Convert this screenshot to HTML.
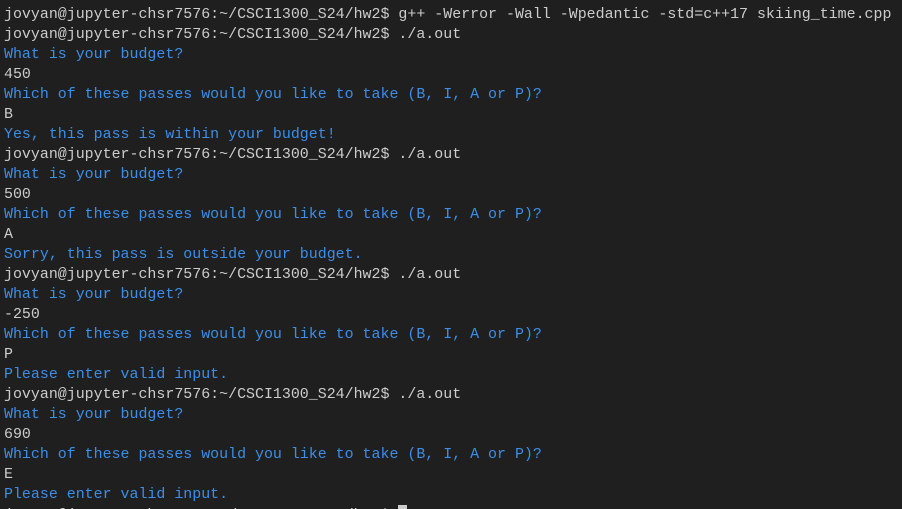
<!DOCTYPE html>
<html><head><style>
html,body{margin:0;padding:0;background:#1f1f1f;width:902px;height:509px;overflow:hidden}
#w{position:relative;width:902px;height:509px;overflow:hidden}
pre{margin:0;position:absolute;left:4px;top:5px;font-family:"Liberation Mono",monospace;font-size:14.95px;line-height:20px;color:#cccccc;white-space:pre}
.b{color:#3b8eea}
.c{display:inline-block;width:9px;height:17px;background:#cccccc;vertical-align:-3px}
</style></head><body><div id="w"><pre>jovyan@jupyter-chsr7576:~/CSCI1300_S24/hw2$ g++ -Werror -Wall -Wpedantic -std=c++17 skiing_time.cpp
jovyan@jupyter-chsr7576:~/CSCI1300_S24/hw2$ ./a.out
<span class="b">What is your budget?</span>
450
<span class="b">Which of these passes would you like to take (B, I, A or P)?</span>
B
<span class="b">Yes, this pass is within your budget!</span>
jovyan@jupyter-chsr7576:~/CSCI1300_S24/hw2$ ./a.out
<span class="b">What is your budget?</span>
500
<span class="b">Which of these passes would you like to take (B, I, A or P)?</span>
A
<span class="b">Sorry, this pass is outside your budget.</span>
jovyan@jupyter-chsr7576:~/CSCI1300_S24/hw2$ ./a.out
<span class="b">What is your budget?</span>
-250
<span class="b">Which of these passes would you like to take (B, I, A or P)?</span>
P
<span class="b">Please enter valid input.</span>
jovyan@jupyter-chsr7576:~/CSCI1300_S24/hw2$ ./a.out
<span class="b">What is your budget?</span>
690
<span class="b">Which of these passes would you like to take (B, I, A or P)?</span>
E
<span class="b">Please enter valid input.</span>
jovyan@jupyter-chsr7576:~/CSCI1300_S24/hw2$ <span class="c"></span></pre></div></body></html>
